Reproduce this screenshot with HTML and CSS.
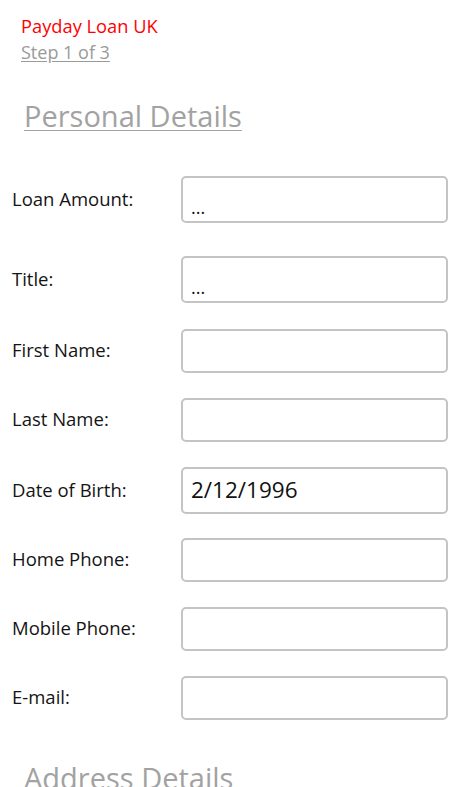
FILE: index.html
```html
<!DOCTYPE html>
<html lang="en">
<head>
<meta charset="utf-8">
<title>Payday Loan UK</title>
<link rel="stylesheet" href="styles.css">
</head>
<body>
<div class="page">
  <header class="header">
    <div class="app-title">Payday Loan UK</div>
    <a class="step">Step 1 of 3</a>
  </header>
  <h1 class="section">Personal Details</h1>
  <form class="form">
    <div class="row tall">
      <label class="label">Loan Amount:</label>
      <div class="field picker"><span class="dots">...</span></div>
    </div>
    <div class="row tall after-picker">
      <label class="label">Title:</label>
      <div class="field picker"><span class="dots">...</span></div>
    </div>
    <div class="row after-title">
      <label class="label">First Name:</label>
      <div class="field"></div>
    </div>
    <div class="row">
      <label class="label">Last Name:</label>
      <div class="field"></div>
    </div>
    <div class="row tall">
      <label class="label">Date of Birth:</label>
      <div class="field date"><span class="value">2/12/1996</span></div>
    </div>
    <div class="row after-date">
      <label class="label">Home Phone:</label>
      <div class="field"></div>
    </div>
    <div class="row">
      <label class="label">Mobile Phone:</label>
      <div class="field"></div>
    </div>
    <div class="row">
      <label class="label">E-mail:</label>
      <div class="field"></div>
    </div>
  </form>
  <h1 class="section next">Address Details</h1>
</div>
</body>
</html>
```

FILE: styles.css
```css
html, body {
  margin: 0;
  padding: 0;
  background: #ffffff;
}

body {
  font-family: "Open Sans", "Noto Sans", sans-serif;
  color: #1a1a1a;
  height: 787px;
  overflow: hidden;
}

.page {
  display: flex;
  flex-direction: column;
}

.header {
  display: flex;
  flex-direction: column;
  padding: 14px 0 0 21px;
}

.app-title {
  color: #ff0000;
  font-size: 18.3px;
  line-height: 24px;
}

.step {
  color: #9a9a9a;
  font-size: 18px;
  line-height: 24px;
  margin-top: 2px;
  text-decoration: underline;
  text-underline-offset: 2px;
}

.section {
  margin: 32px 0 0 24px;
  font-weight: 400;
  font-size: 29px;
  line-height: 40px;
  color: #a2a2a2;
  text-decoration: underline;
  text-decoration-thickness: 1px;
  text-underline-offset: 3px;
}

.section.next {
  margin-top: 38px;
  text-decoration: none;
}

.form {
  display: flex;
  flex-direction: column;
  gap: 25px;
  margin-top: 40px;
}

.row {
  display: grid;
  grid-template-columns: 169px 267px;
  align-items: center;
  padding-left: 12px;
  height: 44px;
}

.row.tall {
  height: 47px;
}

.row.after-picker {
  margin-top: 8px;
}

.row.after-title {
  margin-top: 1px;
}

.row.after-date {
  margin-top: -1px;
}

.label {
  font-size: 18.5px;
  line-height: 24px;
  color: #141414;
  margin-top: -2px;
}

.field {
  box-sizing: border-box;
  height: 100%;
  border: 2px solid #c4c4c4;
  border-radius: 5px;
  display: flex;
  padding: 0 8px;
}

.picker {
  align-items: flex-end;
}

.dots {
  font-size: 18px;
  line-height: 24px;
  padding-bottom: 2px;
  color: #111;
}

.date {
  align-items: center;
}

.value {
  font-size: 22.5px;
  line-height: 28px;
  color: #111;
  margin-top: -1px;
}
```
